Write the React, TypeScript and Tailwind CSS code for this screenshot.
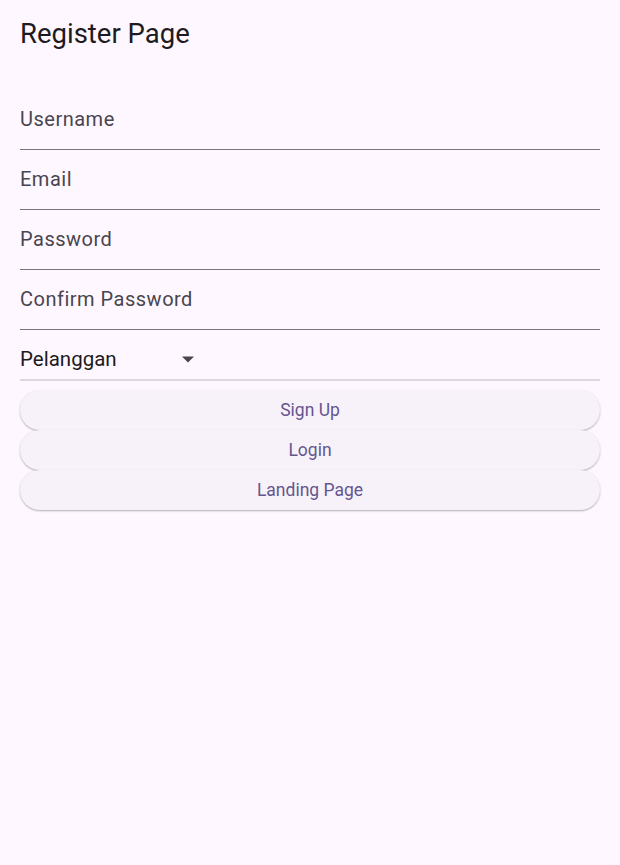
const fields = ["Username", "Email", "Password", "Confirm Password"];
const buttons = ["Sign Up", "Login", "Landing Page"];

const App = () => {
  return (
    <div
      className="min-h-[865px] w-full bg-[#fef7ff] px-5"
      style={{ fontFamily: "Roboto, 'Noto Sans', sans-serif" }}
    >
      <h1 className="pt-[17px] text-[27.5px] leading-[34px] text-[#1d1b20]">
        Register Page
      </h1>

      <div className="mt-[39px] flex flex-col">
        {fields.map((label) => (
          <div
            key={label}
            className="flex h-[60px] items-center border-b border-[#79747e] pb-[2px]"
          >
            <span className="text-[20px] tracking-[0.5px] text-[#49454f]">
              {label}
            </span>
          </div>
        ))}
        <div className="flex h-[51px] items-center border-b-2 border-[#dcd7de] pt-[9px]">
          <div className="flex w-[175px] items-center justify-between">
            <span className="text-[20.5px] text-[#1d1b20]">Pelanggan</span>
            <svg width="14" height="8" viewBox="0 0 14 8">
              <path d="M1 1.5h12L7 7.5z" fill="#49454f" />
            </svg>
          </div>
        </div>
      </div>

      <div className="mt-[9px] flex flex-col">
        {buttons.map((b) => (
          <button
            key={b}
            className="h-[40px] w-full rounded-full bg-[#f7f2fa] text-[17.5px] text-[#65558f] shadow-[0_1px_2px_rgba(0,0,0,0.3)]"
          >
            {b}
          </button>
        ))}
      </div>
    </div>
  );
};

export default App;
